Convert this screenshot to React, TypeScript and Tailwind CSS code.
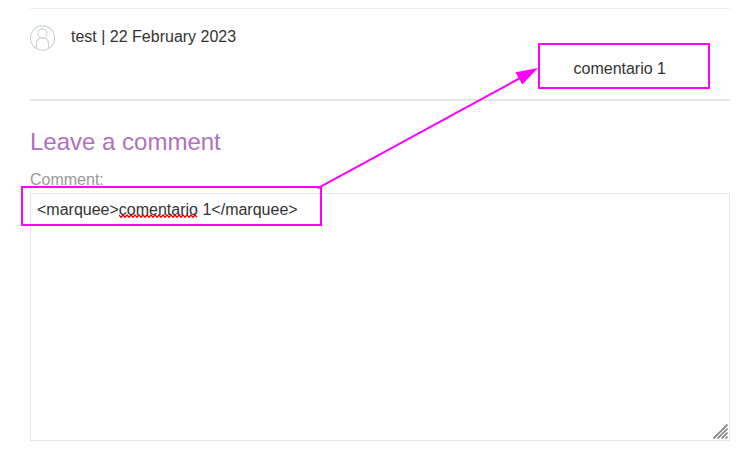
function Avatar() {
  return (
    <svg
      className="mt-4 h-[27px] w-[26px] shrink-0"
      viewBox="0 0 26 27"
      fill="none"
      stroke="#cdd4d4"
      strokeWidth="1.15"
      aria-hidden="true"
    >
      <circle cx="12.5" cy="13" r="12.1" />
      <circle cx="12.4" cy="8.4" r="4.5" />
      <path d="M6.5 23.6V18.8C6.5 15.2 8.9 12.9 12.5 12.9S18.5 15.2 18.5 18.8V23.6" />
    </svg>
  );
}

function Squiggle() {
  const points = Array.from({ length: 40 }, (_, i) => `${i * 2},${i % 2 === 0 ? 1 : 3.2}`).join(" ");
  return (
    <svg className="absolute top-[12px] left-0 h-[5px] w-[79px]" viewBox="0 0 79 5" fill="none">
      <polyline points={points} stroke="#e80000" strokeWidth="1.3" />
    </svg>
  );
}

function Annotations() {
  return (
    <svg className="pointer-events-none absolute inset-0 h-[457px] w-[753px]" viewBox="0 0 753 457" fill="none">
      <rect x="539" y="44" width="170" height="44" stroke="#ff00ff" strokeWidth="2" />
      <rect x="22" y="187" width="299" height="38" stroke="#ff00ff" strokeWidth="2" />
      <path d="M317.5 188.3L522 77" stroke="#ff00ff" strokeWidth="2" />
      <path d="M538 68L515.5 72.3L522.3 84.5Z" fill="#ff00ff" />
    </svg>
  );
}

export default function App() {
  return (
    <main className="relative h-[457px] w-[753px] overflow-hidden bg-white pt-2 pl-[30px] font-['Liberation_Sans',Arial,sans-serif] text-base leading-4 text-[#333332]">
      <section className="h-[93px] w-[700px] border-t border-b-2 border-t-[#ecefef] border-b-[#e5e5e5]">
        <div className="flex gap-[15px]">
          <Avatar />
          <div className="flex flex-1 flex-col">
            <p className="mt-5">test | 22 February 2023</p>
            <p className="mt-4 mr-16 text-right">comentario 1</p>
          </div>
        </div>
      </section>
      <form className="flex w-[700px] flex-col">
        <h1 className="mt-[27px] text-2xl leading-7 text-[#b070c0]">Leave a comment</h1>
        <label className="mt-4 text-[#999999]">Comment:</label>
        <div className="relative mt-[5px] h-[248px] border border-[#e5e5e5] px-[6px] pt-[8px]">
          <p>
            &lt;marquee&gt;
            <span className="relative inline-block">
              comentario
              <Squiggle />
            </span>{" "}
            1&lt;/marquee&gt;
          </p>
          <svg
            className="absolute right-px bottom-px h-[15px] w-[15px]"
            viewBox="0 0 15 15"
            fill="none"
            stroke="#808080"
            strokeWidth="1.6"
          >
            <path d="M.5 14.5L14.5 .5M4.5 14.5L14.5 4.5M8.5 14.5L14.5 8.5M12.5 14.5L14.5 12.5" />
          </svg>
        </div>
      </form>
      <Annotations />
    </main>
  );
}
